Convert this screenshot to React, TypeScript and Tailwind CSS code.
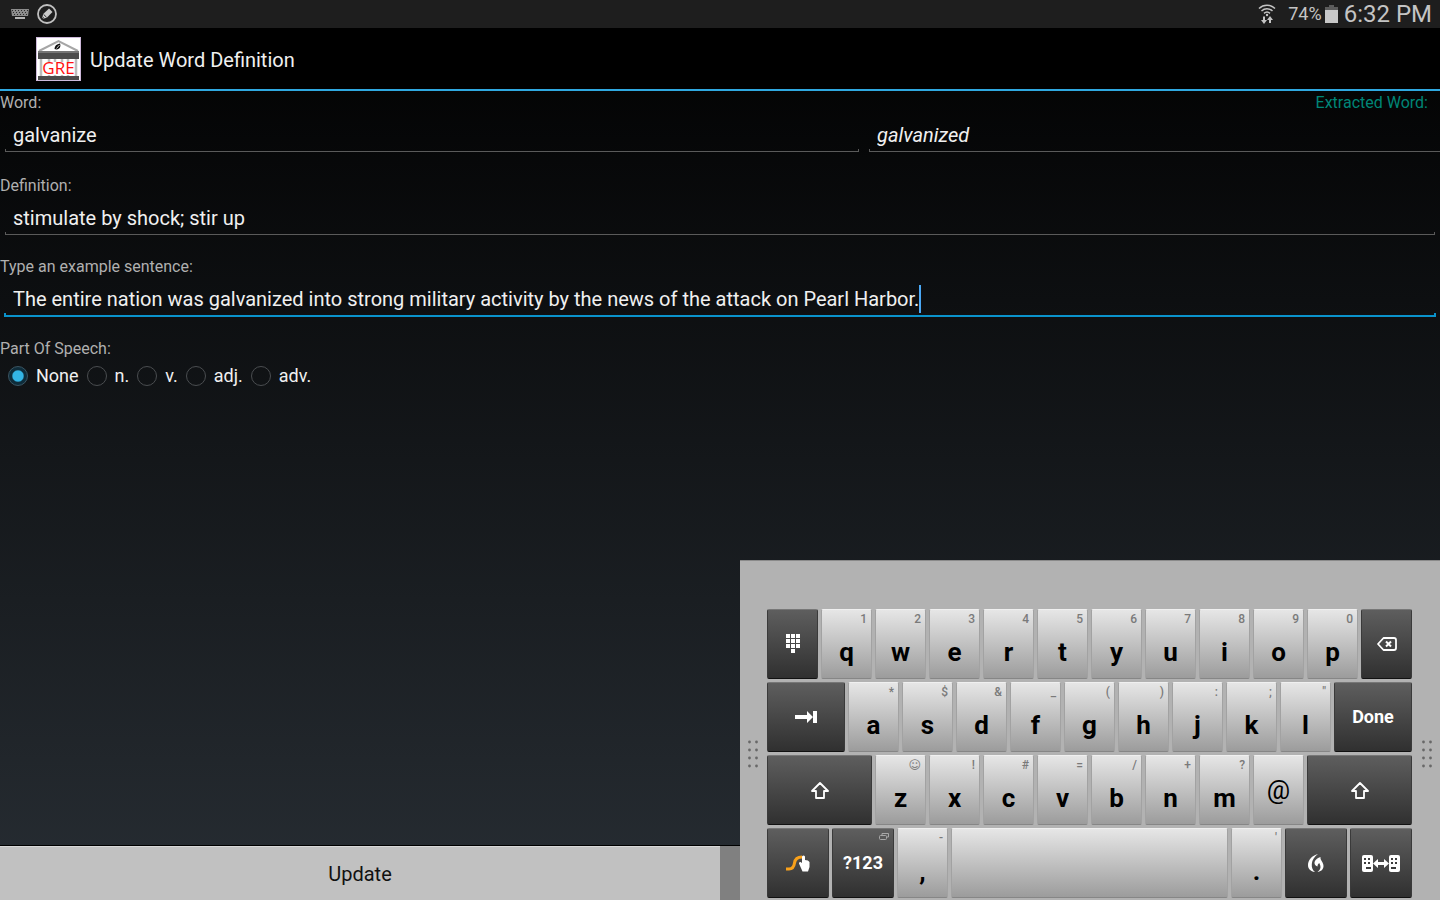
import React, { useState } from 'react';

type KeyDef = { char: string; hint?: string };

const TOP_ROW: KeyDef[] = [
  { char: 'q', hint: '1' },
  { char: 'w', hint: '2' },
  { char: 'e', hint: '3' },
  { char: 'r', hint: '4' },
  { char: 't', hint: '5' },
  { char: 'y', hint: '6' },
  { char: 'u', hint: '7' },
  { char: 'i', hint: '8' },
  { char: 'o', hint: '9' },
  { char: 'p', hint: '0' },
];

const HOME_ROW: KeyDef[] = [
  { char: 'a', hint: '*' },
  { char: 's', hint: '$' },
  { char: 'd', hint: '&' },
  { char: 'f', hint: '_' },
  { char: 'g', hint: '(' },
  { char: 'h', hint: ')' },
  { char: 'j', hint: ':' },
  { char: 'k', hint: ';' },
  { char: 'l', hint: '"' },
];

const BOTTOM_ROW: KeyDef[] = [
  { char: 'z', hint: '☺' },
  { char: 'x', hint: '!' },
  { char: 'c', hint: '#' },
  { char: 'v', hint: '=' },
  { char: 'b', hint: '/' },
  { char: 'n', hint: '+' },
  { char: 'm', hint: '?' },
];

const PARTS = ['None', 'n.', 'v.', 'adj.', 'adv.'];

const KeyboardIcon = () => (
  <svg width="18" height="10" viewBox="0 0 18 10" fill="#b4b4b4">
    <path d="M0 0h18l-1 7H1z" fill="#8c8c8c" />
    <path d="M1 1h1v1H1zM4 1h1v1H4zM7 1h1v1H7zM10 1h1v1h-1zM13 1h1v1h-1zM16 1h1v1h-1zM2 3h1v1H2zM5 3h1v1H5zM8 3h1v1H8zM11 3h1v1h-1zM14 3h1v1h-1zM3 5h1v1H3zM6 5h1v1H6zM9 5h1v1H9zM12 5h1v1h-1zM15 5h1v1h-1z" fill="#2c2c2c" />
    <rect x="4" y="8" width="10" height="2" />
  </svg>
);

const PencilIcon = () => (
  <svg width="20" height="20" viewBox="0 0 20 20" fill="none">
    <circle cx="10" cy="10" r="9" stroke="#c0c0c0" strokeWidth="1.8" />
    <path d="M5 15l1.2-5 5.8-5.4 3.5 3.4-5.7 5.7z" fill="#c8c8c8" />
    <path d="M6.6 10.4l3 2.9M5 15l1.8-1.6" stroke="#1e1e1e" strokeWidth="0.9" />
  </svg>
);

const WifiIcon = () => (
  <svg width="18" height="20" viewBox="0 0 18 20" fill="none" stroke="#c4c4c4" strokeWidth="1.5">
    <path d="M1 4.5c4.5-4.3 11.500-4.300 16 0M3.500 7c3.200-3 7.800-3 11 0M6 9.400c1.800-1.600 4.200-1.600 6 0" />
    <circle cx="9" cy="11" r="1.200" fill="#c4c4c4" stroke="none" />
    <path d="M6 12.500v5M12 19v-5" strokeWidth="2" />
    <path d="M3 16h6l-3 4zM9 16h6l-3-4z" fill="#c4c4c4" stroke="none" />
  </svg>
);

const BatteryIcon = () => (
  <svg width="13" height="18" viewBox="0 0 13 18">
    <path d="M4 0h5v2h4v4H0V2h4z" fill="#5c5c5c" />
    <rect y="5" width="13" height="13" fill="#c8c8c8" />
  </svg>
);

const AppLogo = () => (
  <svg width="45" height="44" viewBox="0 0 45 44">
    <rect width="45" height="44" fill="#fff" />
    <rect x="0.500" y="0.500" width="44" height="43" fill="none" stroke="#cdb9da" />
    <path d="M3 14L22.500 4 42 14" fill="none" stroke="#a6a6a6" strokeWidth="2" />
    <path d="M18.500 12c0-3 2-5 5.500-5.500 1 3 0 5.500-3.500 6z" fill="#111" />
    <path d="M20.500 11.500l3-3.500" stroke="#fff" strokeWidth="0.800" />
    <rect x="2" y="14" width="41" height="8" fill="#4c4c4c" />
    <rect x="2" y="14" width="41" height="2" fill="#757575" />
    <path d="M5 22v17M13 22v17M19 22v17M26 22v17M32 22v17M40 22v17" stroke="#bdbdbd" strokeWidth="2.500" />
    <rect x="7" y="25" width="31" height="13" fill="#fff" />
    <rect x="2" y="39" width="41" height="4" fill="#4c4c4c" />
    <text x="22.500" y="37" textAnchor="middle" fontFamily="Open Sans, sans-serif" fontSize="17" fill="#ff1010">GRE</text>
  </svg>
);

const KeypadIcon = () => (
  <svg width="14" height="20" viewBox="0 0 14 20" fill="#fff">
    <path d="M0 0h4v4H0zM5 0h4v4H5zM10 0h4v4h-4zM0 5h4v4H0zM5 5h4v4H5zM10 5h4v4h-4zM0 10h4v4H0zM5 10h4v4H5zM10 10h4v4h-4zM5 15h4v4H5z" />
  </svg>
);

const BackspaceIcon = () => (
  <svg width="20" height="14" viewBox="0 0 20 14" fill="none" stroke="#fff">
    <path d="M6.500 1H17q2 0 2 2v8q0 2-2 2H6.500L1 7z" strokeWidth="1.800" strokeLinejoin="round" />
    <path d="M9 4.500l5 5M14 4.500l-5 5" strokeWidth="2" />
  </svg>
);

const TabIcon = () => (
  <svg width="22" height="12" viewBox="0 0 22 12" fill="#fff">
    <path d="M0 4h12V0l6 6-6 6V8H0zM18 0h4v12h-4z" />
  </svg>
);

const ShiftIcon = () => (
  <svg width="18" height="17" viewBox="0 0 18 17" fill="none" stroke="#fff" strokeWidth="1.800" strokeLinejoin="round">
    <path d="M9 1l8 8h-4v7H5V9H1z" />
  </svg>
);

const SwypeIcon = () => (
  <svg width="24" height="17" viewBox="0 0 24 17">
    <path d="M0 14h3c4 0 5-2.500 5.500-6S11 2 16 2" fill="none" stroke="#f9a11b" strokeWidth="3" />
    <path d="M16 1.500q1.500-2 3 0V5q3.500 0 4.500 2v5L22 16.500h-5.500L13 8.500q0-2 1.500-1.500L16 8z" fill="#fff" />
  </svg>
);

const WindowsIcon = () => (
  <svg width="10" height="7" viewBox="0 0 10 7" fill="none" stroke="#a8a8a8">
    <path d="M3 2.500V0.500h6.500v3.500H8" />
    <rect x="0.500" y="2.500" width="7" height="4" rx="1" />
  </svg>
);

const FlameIcon = () => (
  <svg width="16" height="18" viewBox="0 0 16 18" fill="#fff">
    <path d="M10 0C4 1.500 0 6 0 11c0 4 2.500 6.500 7 7-2.500-2-3.500-4.500-3.200-8C4.100 6 6.500 2.500 10 0z" />
    <path d="M12.500 3c-.5 3.500 3 5 3 9 0 3.500-2.500 5.500-6 6 2.500-2 3.500-4 2.800-6.500-.3-1-.8-1.500-1-2.500-1.300 1-1.800 2-1.800 3.500-1.500-.5-3-1.500-3-3.500C6.500 6.500 9 4 12.500 3z" />
  </svg>
);

const SwitchIcon = () => (
  <svg width="38" height="17" viewBox="0 0 38 17" fill="#fff">
    <rect width="11" height="17" rx="2" />
    <rect x="27" width="11" height="17" rx="2" />
    <path d="M11 8.500l5-4.500v3h6V4l5 4.500-5 4.500v-3h-6v3z" />
    <path d="M2 3h2v2H2zM6 3h2v2H6zM2 7h2v2H2zM6 7h2v2H6zM4 12h5v2H4zM29 3h2v2h-2zM33 3h2v2h-2zM29 7h2v2h-2zM33 7h2v2h-2zM29 12h5v2h-5z" fill="#3c3c3c" />
  </svg>
);

const DragGrip = () => (
  <svg width="10" height="28" viewBox="0 0 10 28" fill="#686868" className="mt-[131px] shrink-0">
    {[2, 10, 18, 26].map((y) => (
      <React.Fragment key={y}>
        <circle cx="1.5" cy={y} r="1.4" />
        <circle cx="8.5" cy={y} r="1.4" />
      </React.Fragment>
    ))}
  </svg>
);

const LetterKey = ({ char, hint }: KeyDef) => (
  <button
    aria-label={char}
    className="relative h-[70px] w-[51px] rounded-xs border border-t-[#f0f0f0] border-x-[#a2a2a2] border-b-[#868686] bg-linear-to-b/srgb from-[#e6e6e6] to-[#9c9c9c] text-black"
  >
    <span className={char === '@' ? 'block text-[26px] leading-8' : 'block pt-4 text-[26px] leading-8 font-bold'}>{char}</span>
    {hint && (
      <span className="absolute -top-px right-1 font-[Roboto,'DejaVu_Sans',sans-serif] text-xs leading-5 font-medium text-[#7a7a7a]">{hint}</span>
    )}
  </button>
);

const DarkKey = ({ label, className, children }: { label: string; className: string; children: React.ReactNode }) => (
  <button
    aria-label={label}
    className={`relative flex h-[70px] items-center justify-center rounded-xs border border-t-[#777777] border-x-[#3a3a3a] border-b-[#111111] bg-linear-to-b/srgb from-[#5e5e5e] to-[#303030] text-white ${className}`}
  >
    {children}
  </button>
);

const Keyboard = () => (
  <div className="absolute right-0 bottom-0 flex w-[700px] justify-between border-t border-t-[#8a8a8a] bg-[#b2b2b2] px-2 pt-12 pb-0.5">
    <div className="w-[19px]">
      <DragGrip />
    </div>
    <div className="flex flex-1 flex-col gap-[3px]">
      <div className="flex gap-[3px]">
        <DarkKey label="Keypad" className="w-[51px]"><KeypadIcon /></DarkKey>
        {TOP_ROW.map((k) => <LetterKey key={k.char} {...k} />)}
        <DarkKey label="Backspace" className="w-[51px]"><BackspaceIcon /></DarkKey>
      </div>
      <div className="flex gap-[3px]">
        <DarkKey label="Tab" className="w-[78px]"><TabIcon /></DarkKey>
        {HOME_ROW.map((k) => <LetterKey key={k.char} {...k} />)}
        <DarkKey label="Done" className="w-[78px]">
          <span className="text-lg font-bold">Done</span>
        </DarkKey>
      </div>
      <div className="flex gap-[3px]">
        <DarkKey label="Left shift" className="w-[105px]"><ShiftIcon /></DarkKey>
        {BOTTOM_ROW.map((k) => <LetterKey key={k.char} {...k} />)}
        <LetterKey char="@" />
        <DarkKey label="Right shift" className="w-[105px]"><ShiftIcon /></DarkKey>
      </div>
      <div className="flex gap-[3px]">
        <DarkKey label="Swype" className="w-[62px]"><SwypeIcon /></DarkKey>
        <DarkKey label="Symbols" className="w-[62px]">
          <span className="text-lg font-bold">?123</span>
          <span className="absolute top-1 right-1"><WindowsIcon /></span>
        </DarkKey>
        <LetterKey char="," hint="-" />
        <button
          aria-label="Space"
          className="h-[70px] flex-1 rounded-xs border border-t-[#f0f0f0] border-x-[#a2a2a2] border-b-[#868686] bg-linear-to-b/srgb from-[#e6e6e6] to-[#9c9c9c]"
        />
        <LetterKey char="." hint="'" />
        <DarkKey label="Voice input" className="w-[62px]"><FlameIcon /></DarkKey>
        <DarkKey label="Switch layout" className="w-[62px]"><SwitchIcon /></DarkKey>
      </div>
    </div>
    <div className="flex w-5 justify-end">
      <DragGrip />
    </div>
  </div>
);

const App = () => {
  const [word, setWord] = useState('galvanize');
  const [extracted, setExtracted] = useState('galvanized');
  const [definition, setDefinition] = useState('stimulate by shock; stir up');
  const [sentence, setSentence] = useState(
    'The entire nation was galvanized into strong military activity by the news of the attack on Pearl Harbor.'
  );
  const [part, setPart] = useState('None');

  return (
    <div className="relative flex min-h-screen flex-col overflow-hidden bg-linear-to-b/srgb from-black to-[#272d33] font-[Roboto,sans-serif] text-[#f0f0f0]">
      <div className="flex h-7 items-center justify-between bg-[#1e1e1e] pr-2 pl-[11px] text-[#c4c4c4]">
        <div className="flex items-center gap-2">
          <KeyboardIcon />
          <PencilIcon />
        </div>
        <div className="flex items-center">
          <WifiIcon />
          <span className="ml-3 text-lg">74%</span>
          <span className="ml-[3px]"><BatteryIcon /></span>
          <span className="ml-1.5 text-2xl">6:32 PM</span>
        </div>
      </div>

      <header className="flex h-[63px] items-center gap-[9px] border-b-2 border-[#2fa8e0] bg-black pl-9">
        <AppLogo />
        <h1 className="pt-0.5 text-xl">Update Word Definition</h1>
      </header>

      <form className="flex flex-1 flex-col" onSubmit={(e) => e.preventDefault()}>
        <div className="flex flex-1 flex-col gap-[22px] pt-0.5">
          <div className="pb-0.5">
            <div className="flex justify-between pr-3 text-base leading-5">
              <label htmlFor="word" className="text-[#b0b0b0]">Word:</label>
              <label htmlFor="extracted" className="text-[#008577]">Extracted Word:</label>
            </div>
            <div className="flex">
              <div className="w-3/5 px-[5px] pt-2">
                <input id="word" value={word} onChange={(e) => setWord(e.target.value)} className="block h-7 w-full px-2 text-xl outline-none" />
                <div className="h-[3px] border-x border-b border-[#5a5a5a]" />
              </div>
              <div className="w-2/5 pt-2 pl-[5px]">
                <input id="extracted" value={extracted} onChange={(e) => setExtracted(e.target.value)} className="block h-7 w-full px-2 text-xl italic outline-none" />
                <div className="h-[3px] border-b border-l border-[#5a5a5a]" />
              </div>
            </div>
          </div>

          <div>
            <label htmlFor="definition" className="block text-base leading-5 text-[#b0b0b0]">Definition:</label>
            <div className="px-[5px] pt-2">
              <input id="definition" value={definition} onChange={(e) => setDefinition(e.target.value)} className="block h-7 w-full px-2 text-xl outline-none" />
              <div className="h-[3px] border-x border-b border-[#5a5a5a]" />
            </div>
          </div>

          <div>
            <label htmlFor="sentence" className="block text-base leading-5 text-[#b0b0b0]">Type an example sentence:</label>
            <div className="px-1 pt-2">
              <div className="flex h-7 items-center pl-[9px]">
                <input id="sentence" value={sentence} onChange={(e) => setSentence(e.target.value)} className="field-sizing-content h-7 text-xl outline-none" />
                <span className="h-7 w-0.5 bg-[#4aa8f5]" />
              </div>
              <div className="h-1 border-x-2 border-b-2 border-[#0a93cc]" />
            </div>
          </div>

          <fieldset>
            <legend className="text-base leading-5 text-[#b0b0b0]">Part Of Speech:</legend>
            <div className="flex gap-2 pt-[3px] pl-2 text-lg">
              {PARTS.map((p) => (
                <label key={p} className="flex items-center gap-2">
                  <input
                    type="radio"
                    name="part"
                    checked={part === p}
                    onChange={() => setPart(p)}
                    className="size-5 appearance-none rounded-full border border-[#4a4d50] checked:border-[#3a5563] checked:bg-radial checked:from-[#33b5e5] checked:from-40% checked:to-[#0e2c3a] checked:to-50%"
                  />
                  {p}
                </label>
              ))}
            </div>
          </fieldset>
        </div>

        <div className="flex h-[55px] border-t border-black bg-[#808080]">
          <button type="submit" className="w-1/2 border-t border-[#d8d8d8] bg-[#c1c1c1] text-xl text-[#111111]">Update</button>
        </div>
      </form>

      <Keyboard />
    </div>
  );
};

export default App;
